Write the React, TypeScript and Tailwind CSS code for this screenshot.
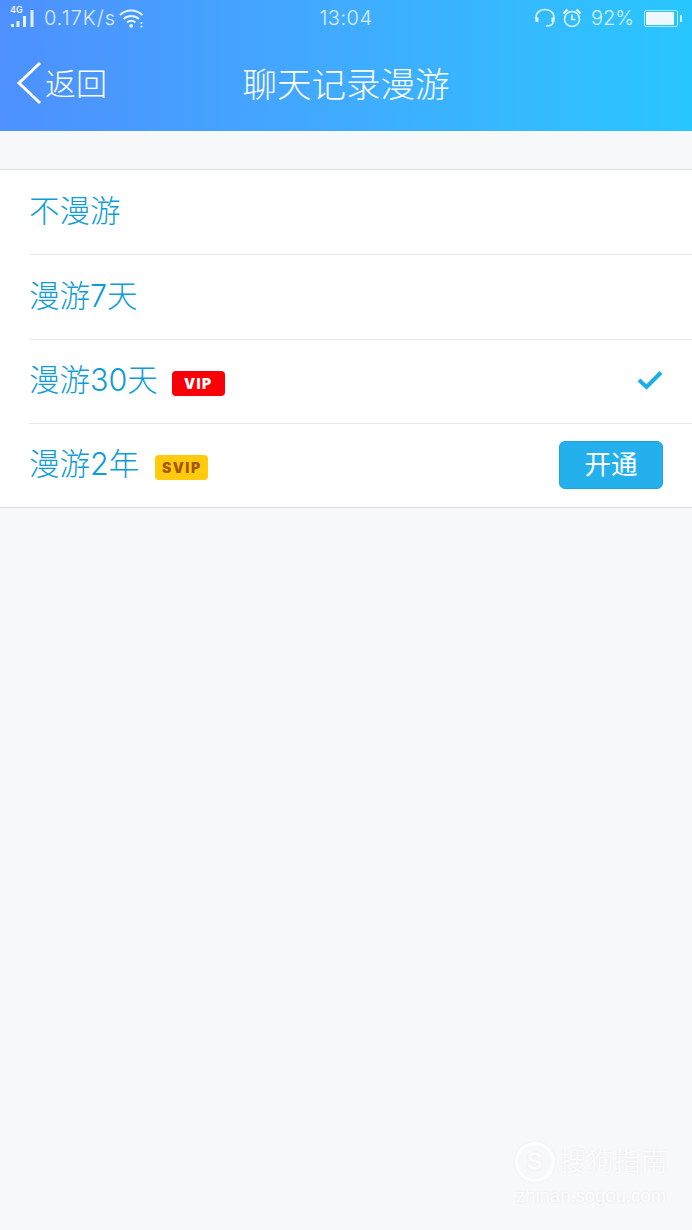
const cjk = 'font-["Inter","Noto_Sans_CJK_SC",sans-serif] font-light';

const ROWS = [
  { id: 'none', label: '不漫游', height: 'h-[85px]' },
  { id: '7', label: '漫游7天', height: 'h-[85px]' },
  { id: '30', label: '漫游30天', height: 'h-[84px]', badge: 'VIP', gap: 'ml-[14px]', checked: true },
  { id: '2y', label: '漫游2年', height: 'h-[83px]', badge: 'SVIP', gap: 'ml-[16px]', action: '开通' },
];

function SignalIcon() {
  return (
    <span className="relative block h-[26px] w-[26px]">
      <span className="absolute left-0 top-[-1px] text-[9px] font-semibold leading-[12px] text-white/90">4G</span>
      <svg width="26" height="26" viewBox="0 0 26 26" className="absolute left-0 top-0" fill="#e3f2ff">
        <rect x="1" y="19" width="3" height="3" />
        <rect x="6.500" y="16" width="3" height="6" />
        <rect x="13" y="11" width="3" height="11" />
        <rect x="20.500" y="5" width="3" height="17" />
      </svg>
    </span>
  );
}

function WifiIcon() {
  return (
    <svg width="25" height="19" viewBox="0 0 25 19" fill="none" stroke="#e8f4ff" strokeWidth="2">
      <path d="M1 6C7 0 17 0 23.500 6" />
      <path d="M4.500 10C9 6 15.500 6 20 10" />
      <path d="M8 13.500C10.500 11.500 14 11.500 16.500 13.500" />
      <circle cx="12.200" cy="16.800" r="1.900" fill="#e8f4ff" stroke="none" />
      <circle cx="22.500" cy="14" r="1.100" fill="#e8f4ff" stroke="none" />
      <circle cx="22.500" cy="17.500" r="1.100" fill="#e8f4ff" stroke="none" />
    </svg>
  );
}

function HeadsetIcon() {
  return (
    <svg width="22" height="20" viewBox="0 0 22 20" fill="none" stroke="#e3f6ff" strokeWidth="1.600">
      <path d="M2.500 12C0.500 5 6 1.500 11 1.500C16 1.500 21.500 5 19.500 12" />
      <path d="M3 9.500V14" strokeWidth="3" />
      <path d="M19 9.500V14" strokeWidth="3" />
      <path d="M19 14C19 17 16 18 12 18" />
    </svg>
  );
}

function AlarmIcon() {
  return (
    <svg width="20" height="20" viewBox="0 0 20 20" fill="none" stroke="#e3f6ff" strokeWidth="1.500">
      <circle cx="10" cy="11" r="7.500" />
      <path d="M10 6.500V11.500H13.500" />
      <path d="M1.500 5.500L5.500 1.500" strokeWidth="2.400" />
      <path d="M18.500 5.500L14.500 1.500" strokeWidth="2.400" />
    </svg>
  );
}

function BatteryIcon() {
  return (
    <span className="flex items-center">
      <span className="flex h-[17px] w-[34px] rounded-[2px] border border-white/60 p-px">
        <span className="h-full w-[92%] bg-[#eef8ff]" />
      </span>
      <span className="ml-[2px] h-[7px] w-[2px] bg-white/80" />
    </span>
  );
}

function StatusBar() {
  return (
    <div className="relative flex h-[36px] items-center pl-[10px] pr-[10px] text-[20px] leading-none text-white/80">
      <div className="flex items-center">
        <SignalIcon />
        <span className="ml-[8px] tracking-[1px]">0.17K/s</span>
        <span className="ml-[3px]">
          <WifiIcon />
        </span>
      </div>
      <span className="absolute left-0 right-0 text-center tracking-[0.500px]">13:04</span>
      <div className="ml-auto flex items-center">
        <HeadsetIcon />
        <span className="ml-[6px]">
          <AlarmIcon />
        </span>
        <span className="ml-[9px]">92%</span>
        <span className="ml-[10px]">
          <BatteryIcon />
        </span>
      </div>
    </div>
  );
}

function NavBar() {
  return (
    <div className="relative flex h-[95px] items-center pb-[1px] pl-[16px] text-white">
      <svg width="26" height="44" viewBox="0 0 26 44" fill="none" stroke="white" strokeWidth="3">
        <path d="M24 2L3 22L24 42" />
      </svg>
      <span className="ml-[3px] text-[31px] leading-none">返回</span>
      <span className="absolute left-0 right-0 pt-[5px] text-center text-[34.500px] leading-none">聊天记录漫游</span>
    </div>
  );
}

function Badge({ kind }: { kind: string }) {
  const vip = kind === 'VIP';
  return (
    <span
      className={`flex h-[25px] w-[53px] items-center justify-center rounded-[4px] text-[14px] font-black tracking-[1.500px] ${
        vip ? 'bg-[#fb0007] text-white' : 'bg-[#ffcb0c] text-[#a8560f]'
      }`}
    >
      {kind}
    </span>
  );
}

export default function App() {
  return (
    <div className={`flex h-[1230px] w-[692px] flex-col overflow-hidden bg-[#f7f8fa] ${cjk}`}>
      <div className="h-[131px] bg-linear-to-r from-[#4d90fe] to-[#27c6ff]">
        <StatusBar />
        <NavBar />
      </div>

      <div className="mt-[38px] border-y border-[#dcdde0] bg-white">
        {ROWS.map((row, i) => (
          <div key={row.id} className="pl-[29px]">
            <div
              className={`flex items-center pr-[29px] ${row.height} ${
                i < ROWS.length - 1 ? 'border-b border-[#e8e9ec]' : ''
              }`}
            >
              <span className="pb-[2px] text-[30.500px] leading-none text-[#0e9dd6]">{row.label}</span>
              {row.badge && (
                <span className={`mt-[3px] ${row.gap}`}>
                  <Badge kind={row.badge} />
                </span>
              )}
              {row.checked && (
                <svg width="26" height="20" viewBox="0 0 26 20" fill="none" stroke="#1aaeea" strokeWidth="4" className="ml-auto mr-0 mb-[3px]">
                  <path d="M2 10L9.500 17L24 2.500" />
                </svg>
              )}
              {row.action && (
                <button className="ml-auto mb-[1px] flex h-[48px] w-[104px] items-center justify-center rounded-[6px] border border-[#1ba5db] bg-[#23b0ec] text-[26.500px] font-normal text-white">
                  {row.action}
                </button>
              )}
            </div>
          </div>
        ))}
      </div>

      {/* watermark */}
      <div className="mt-auto mb-[25px] ml-auto mr-[24px] flex w-[154px] flex-col items-center text-white/80 [text-shadow:0_0_3px_rgba(0,0,0,0.08)]">
        <div className="flex items-center">
          <span className="flex h-[40px] w-[40px] items-center justify-center rounded-full border-[3px] border-white/80 text-[24px] font-bold leading-none shadow-[0_0_3px_rgba(0,0,0,0.06)]">
            S
          </span>
          <span className="ml-[5px] text-[27px] leading-none">搜狗指南</span>
        </div>
        <span className="mt-[5px] text-[18.500px] leading-none font-['Liberation_Sans',sans-serif]">zhinan.sogou.com</span>
      </div>
    </div>
  );
}
